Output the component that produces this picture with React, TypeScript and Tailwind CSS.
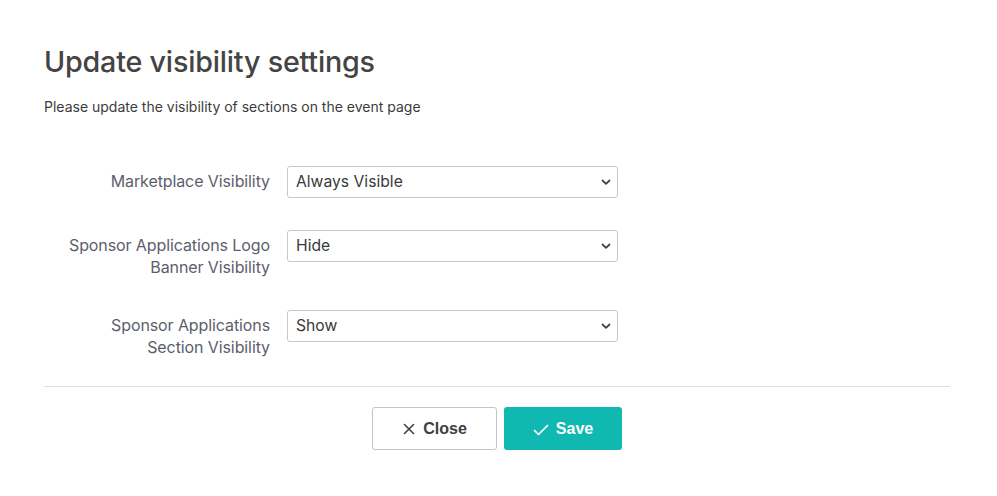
import { useState } from 'react'

type Row = { label: string[]; value: string; options: string[] }

const ROWS: Row[] = [
  { label: ['Marketplace Visibility'], value: 'Always Visible', options: ['Always Visible', 'Hide', 'Show'] },
  { label: ['Sponsor Applications Logo', 'Banner Visibility'], value: 'Hide', options: ['Hide', 'Show'] },
  { label: ['Sponsor Applications', 'Section Visibility'], value: 'Show', options: ['Show', 'Hide'] },
]

function Chevron() {
  return (
    <svg className="pointer-events-none absolute right-[7px] top-1/2 -translate-y-1/2 w-[10px] h-[10px] text-[#444]" viewBox="0 0 10 10" fill="none" stroke="currentColor">
      <path d="M1.5 3.5L5 6.8L8.5 3.5" strokeWidth={1.8} strokeLinecap="round" strokeLinejoin="round" />
    </svg>
  )
}

function SelectRow({ row }: { row: Row }) {
  const [value, setValue] = useState(row.value)
  return (
    <div className="flex items-start mb-8">
      <label className="w-[226px] pt-1 text-right text-[16px] leading-[22px] text-[#5d5e6c] tracking-[-0.1px]">
        {row.label.map(l => <div key={l}>{l}</div>)}
      </label>
      <div className="relative ml-[17px] w-[331px]">
        <select value={value} onChange={e => setValue(e.target.value)}
          className="appearance-none w-full h-8 pl-2 pr-6 rounded-[3px] border border-[#c9c9cc] bg-white text-[15.7px] text-[#3a3a3a] focus:outline-none"
          style={{ fontFamily: 'inherit' }}>
          {row.options.map(o => <option key={o}>{o}</option>)}
        </select>
        <Chevron />
      </div>
    </div>
  )
}

export default function App() {
  return (
    <div className="w-[997px] h-[496px] bg-white px-[44px] pt-[42px]" style={{ fontFamily: 'Inter, "Noto Sans", sans-serif' }}>
      <h1 className="text-[28.7px] leading-[40px] font-medium text-[#444444] tracking-[-0.2px]">Update visibility settings</h1>
      <p className="mt-[16px] text-[14px] leading-[18px] text-[#3c3c3c]">Please update the visibility of sections on the event page</p>

      <div className="mt-[50px]">
        {ROWS.map(r => <SelectRow key={r.label.join(' ')} row={r} />)}
      </div>

      <div className="w-[906px] border-t border-[#dddddd] -mt-[4px]" />

      <div className="w-[906px] flex justify-center gap-[7px] pt-[20px]" style={{ fontFamily: '"Liberation Sans", Arial, sans-serif' }}>
        <button className="w-[125px] h-[43px] flex items-center justify-center gap-[7px] rounded-[3px] border border-[#c4c4c4] bg-white text-[16px] font-bold text-[#404040] cursor-pointer">
          <svg className="w-[14px] h-[14px]" viewBox="0 0 14 14" fill="none" stroke="currentColor" strokeWidth={1.6} strokeLinecap="round">
            <path d="M2.5 2.5L11.5 11.5M11.5 2.5L2.5 11.5" />
          </svg>
          Close
        </button>
        <button className="w-[118px] h-[43px] flex items-center justify-center gap-[7px] rounded-[3px] bg-[#0fb9b1] text-[16px] font-bold text-white cursor-pointer">
          <svg className="w-[16px] h-[14px] mt-[2px]" viewBox="0 0 16 14" fill="none" stroke="currentColor" strokeWidth={1.7} strokeLinecap="round" strokeLinejoin="round">
            <path d="M1.5 7.5L5.5 11.5L14.5 2.5" />
          </svg>
          Save
        </button>
      </div>
    </div>
  )
}
